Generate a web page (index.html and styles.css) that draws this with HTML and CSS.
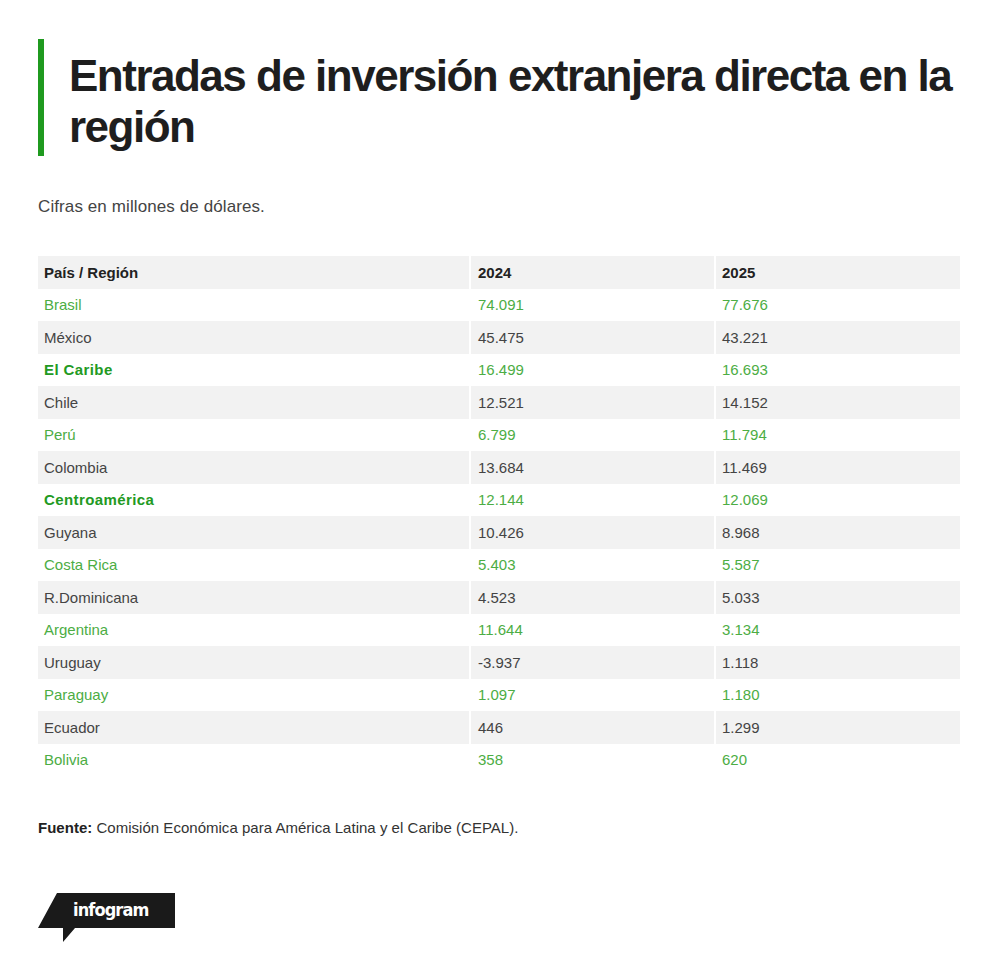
FILE: index.html
```html
<!DOCTYPE html>
<html lang="es">
<head>
<meta charset="utf-8">
<link rel="stylesheet" href="styles.css">
</head>
<body>
<div class="page">
  <div class="title-wrap">
    <h1 class="title">Entradas de inversión extranjera directa en la región</h1>
  </div>
  <p class="subtitle">Cifras en millones de dólares.</p>
  <table class="data">
    <thead>
      <tr><th class="c1">País / Región</th><th class="c2">2024</th><th class="c3">2025</th></tr>
    </thead>
    <tbody>
      <tr class="g"><td>Brasil</td><td>74.091</td><td>77.676</td></tr>
      <tr><td>México</td><td>45.475</td><td>43.221</td></tr>
      <tr class="g"><td class="b">El Caribe</td><td>16.499</td><td>16.693</td></tr>
      <tr><td>Chile</td><td>12.521</td><td>14.152</td></tr>
      <tr class="g"><td>Perú</td><td>6.799</td><td>11.794</td></tr>
      <tr><td>Colombia</td><td>13.684</td><td>11.469</td></tr>
      <tr class="g"><td class="b">Centroamérica</td><td>12.144</td><td>12.069</td></tr>
      <tr><td>Guyana</td><td>10.426</td><td>8.968</td></tr>
      <tr class="g"><td>Costa Rica</td><td>5.403</td><td>5.587</td></tr>
      <tr><td>R.Dominicana</td><td>4.523</td><td>5.033</td></tr>
      <tr class="g"><td>Argentina</td><td>11.644</td><td>3.134</td></tr>
      <tr><td>Uruguay</td><td>-3.937</td><td>1.118</td></tr>
      <tr class="g"><td>Paraguay</td><td>1.097</td><td>1.180</td></tr>
      <tr><td>Ecuador</td><td>446</td><td>1.299</td></tr>
      <tr class="g"><td>Bolivia</td><td>358</td><td>620</td></tr>
    </tbody>
  </table>
  <p class="source"><strong>Fuente:</strong> Comisión Económica para América Latina y el Caribe (CEPAL).</p>
  <div class="logo">
    <svg class="logo-shape" width="138" height="50" viewBox="0 0 138 50">
      <polygon points="19,0 137,0 137,35 37,35 25,49 25,35 0,35" fill="#1a1a1a"/>
    </svg>
    <span class="logo-text">infogram</span>
  </div>
</div>
</body>
</html>
```
FILE: styles.css
```css
* { box-sizing: border-box; }
body {
  margin: 0;
  background: #fff;
  font-family: "Liberation Sans", Arial, sans-serif;
  color: #333;
}
.page {
  padding: 39px 40px 0 38px;
}
.title-wrap {
  border-left: 6px solid #1f9a1f;
  padding-left: 25px;
  height: 117px;
  padding-top: 11px;
}
.title {
  margin: 0;
  font-size: 44px;
  line-height: 51px;
  font-weight: 700;
  letter-spacing: -1.5px;
  color: #1e1e1e;
}
.subtitle {
  margin: 40px 0 0 0;
  font-size: 17px;
  line-height: 22px;
  color: #444;
  letter-spacing: 0.1px;
}
.data {
  margin-top: 38px;
  margin-left: -2px;
  width: 926px;
  table-layout: fixed;
  border-collapse: separate;
  border-spacing: 2px 0;
  font-size: 15px;
}
.data th, .data td {
  height: 32.5px;
  padding: 0 6px;
  text-align: left;
  vertical-align: middle;
}
.data th {
  font-weight: 700;
  color: #222;
  background: #f2f2f2;
}
.c1 { width: 431px; }
.c2 { width: 243px; }
.c3 { width: 244px; }
.data th:nth-child(2), .data td:nth-child(2) { padding-left: 7px; }
.data tbody tr:nth-child(even) td { background: #f2f2f2; }
.data td { color: #444; }
.data tr.g td { color: #4cad44; }
.data tr.g td.b { color: #229a22; font-weight: 700; letter-spacing: 0.4px; }
.source {
  margin: 43px 0 0 0;
  font-size: 15px;
  line-height: 18px;
  color: #333;
  letter-spacing: 0.02px;
}
.source strong { color: #222; }
.logo {
  position: relative;
  margin-top: 56px;
  width: 138px;
  height: 50px;
}
.logo-shape { display: block; }
.logo-text {
  position: absolute;
  left: 35px;
  top: 5px;
  font-family: "DejaVu Sans", sans-serif;
  font-stretch: condensed;
  font-weight: 700;
  font-size: 18px;
  line-height: 24px;
  color: #fff;
  letter-spacing: -0.9px;
}
```
